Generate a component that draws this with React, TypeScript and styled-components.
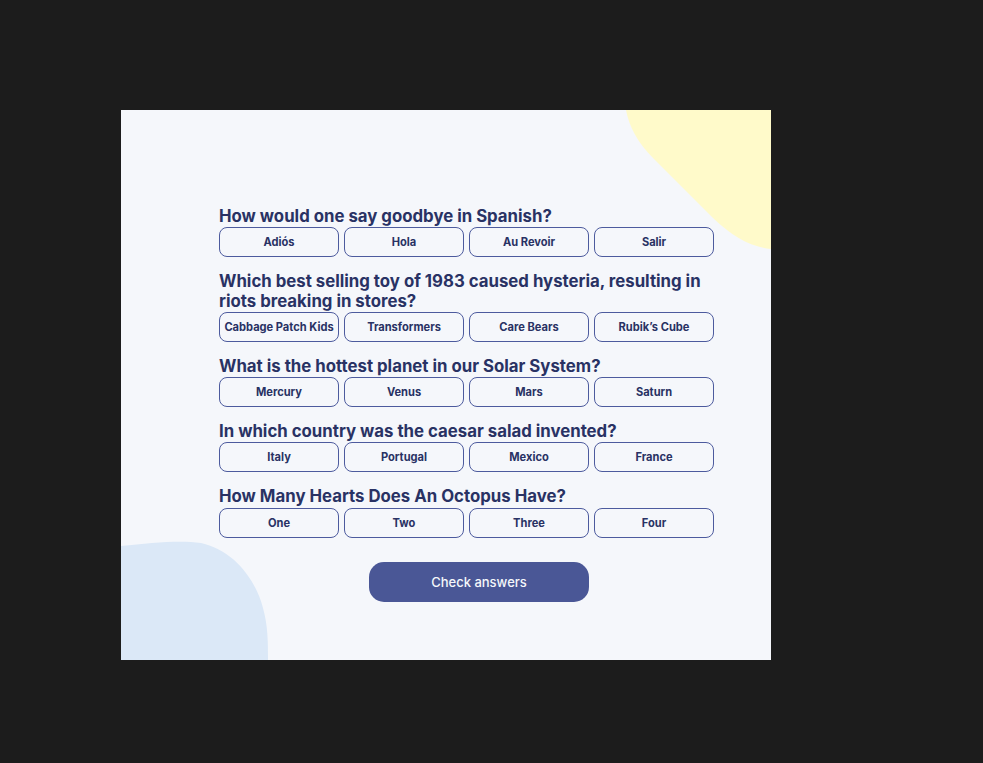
import React from 'react'
import styled, { createGlobalStyle } from 'styled-components'

const GlobalStyle = createGlobalStyle`
  html, body {
    margin: 0;
    padding: 0;
    background: #1c1c1c;
    font-family: Inter, "Noto Sans", sans-serif;
  }
`

const Page = styled.div`
  min-height: 763px;
  padding: 110px 0 0 121px;
  box-sizing: border-box;
`

const Card = styled.main`
  position: relative;
  width: 650px;
  height: 550px;
  background: #f5f7fb;
  overflow: hidden;
  box-sizing: border-box;
  padding: 97px 0 0 98px;
`

const Blob = styled.svg`
  position: absolute;
  top: 0;
  left: 0;
  width: 650px;
  height: 550px;
  pointer-events: none;
`

const Content = styled.div`
  position: relative;
  display: flex;
  flex-direction: column;
  width: 495px;
`

const Question = styled.section`
  margin-bottom: 15px;
`

const Title = styled.h2`
  margin: 0 0 1px;
  font-size: 16.8px;
  line-height: 19.3px;
  font-weight: 700;
  color: #293264;
`

const Answers = styled.div`
  display: grid;
  grid-template-columns: repeat(4, 120px);
  gap: 5px;
`

const Answer = styled.button`
  height: 30px;
  padding: 0;
  border: 1px solid #4d5b9e;
  border-radius: 8px;
  background: transparent;
  font-family: Inter, "Noto Sans", sans-serif;
  font-size: 11.1px;
  font-weight: 700;
  color: #293264;
  cursor: pointer;
`

const CheckButton = styled.button`
  margin: 9px 0 0 150px;
  width: 220px;
  height: 40px;
  border: none;
  border-radius: 15px;
  background: #4a5796;
  color: #f5f7fb;
  font-family: Inter, "Noto Sans", sans-serif;
  font-size: 13px;
  font-weight: 500;
  cursor: pointer;
`

const questions = [
  {
    q: 'How would one say goodbye in Spanish?',
    a: ['Adiós', 'Hola', 'Au Revoir', 'Salir'],
  },
  {
    q: 'Which best selling toy of 1983 caused hysteria, resulting in riots breaking in stores?',
    a: ['Cabbage Patch Kids', 'Transformers', 'Care Bears', 'Rubik\u2019s Cube'],
  },
  {
    q: 'What is the hottest planet in our Solar System?',
    a: ['Mercury', 'Venus', 'Mars', 'Saturn'],
  },
  {
    q: 'In which country was the caesar salad invented?',
    a: ['Italy', 'Portugal', 'Mexico', 'France'],
  },
  {
    q: 'How Many Hearts Does An Octopus Have?',
    a: ['One', 'Two', 'Three', 'Four'],
  },
]

export default function App() {
  return (
    <>
      <GlobalStyle />
      <Page>
        <Card>
          <Blob viewBox="0 0 650 550">
            <path
              d="M505,0 C508,16 516,32 532,48 L592,108 C612,127 630,137 650,139 L650,0 Z"
              fill="#fffaca"
            />
            <path
              d="M0,436 C30,433 58,430 80,433 C112,440 134,468 142,498 C147,516 147,532 147,550 L0,550 Z"
              fill="#dbe8f7"
            />
          </Blob>
          <Content>
            {questions.map((item) => (
              <Question key={item.q}>
                <Title>{item.q}</Title>
                <Answers>
                  {item.a.map((ans) => (
                    <Answer key={ans}>{ans}</Answer>
                  ))}
                </Answers>
              </Question>
            ))}
            <CheckButton>Check answers</CheckButton>
          </Content>
        </Card>
      </Page>
    </>
  )
}
